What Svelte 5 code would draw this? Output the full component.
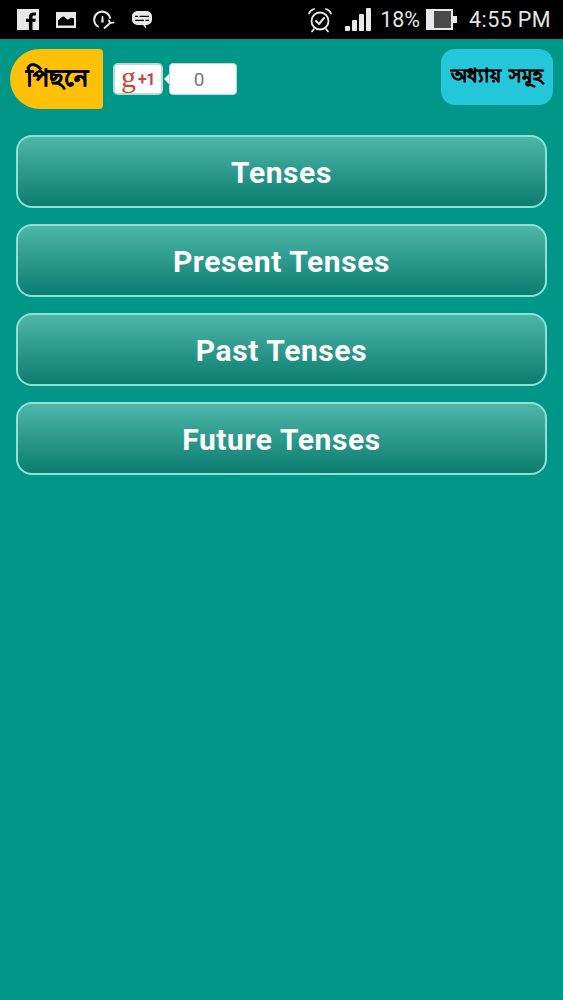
<script>
	const chapters = ['Tenses', 'Present Tenses', 'Past Tenses', 'Future Tenses'];
</script>

<div class="screen">
	<div class="status">
		<div class="status-left">
			<svg viewBox="0 0 22 21" width="22" height="21">
				<path fill="#e8e8e8" d="M0 0h22v21h-6.500v-8h2.800l.5-3.200h-3.300V8c0-1 .3-1.600 1.600-1.600h1.800V3.500c-.4 0-1.400-.1-2.600-.1-2.600 0-4.300 1.500-4.300 4.200v2.200H9V13h2.900v8H0z" />
			</svg>
			<svg viewBox="0 0 20 16" width="20" height="16">
				<path fill="#e8e8e8" fill-rule="evenodd" d="M0 0h20v16H0zM2 13.500h16V6.500c-1.500-.6-2.600-1-3.600-.5-1.200.6-1.800 1.700-3.200 1.400C9.800 7.100 9.300 4.800 7.600 4.500 5.800 4.200 4 7.200 2 8.500z" />
			</svg>
			<svg viewBox="0 0 22 19" width="22" height="19">
				<path fill="none" stroke="#e8e8e8" stroke-width="2" stroke-linecap="round" d="M5 16.500A8 8 0 1 1 17 8" />
				<path fill="#e8e8e8" d="M8.800 6h1.400l.5 5.500a1.200 1.200 0 1 1-2.400 0z" />
				<path fill="none" stroke="#e8e8e8" stroke-width="1.800" stroke-linecap="round" d="M11.500 18l6-5.500" />
				<path fill="none" stroke="#e8e8e8" stroke-width="1.800" stroke-linecap="round" d="M16 10.500c.2 2 2.200 3 4.500 2" />
			</svg>
			<svg viewBox="0 0 20 18" width="20" height="18">
				<path fill="#e8e8e8" fill-rule="evenodd" d="M6 0h8c3.500 0 6 2.300 6 5.500v3c0 3.200-2.500 5.500-6 5.500h-.5l1 4L11 14H6c-3.500 0-6-2.300-6-5.500v-3C0 2.300 2.500 0 6 0zM3 4.700V6h14V4.700zM3 8.700V10h14V8.700z" />
				<rect x="6" y="4" width="1.500" height="2.500" fill="#e8e8e8" />
				<rect x="12" y="8" width="1.500" height="2.500" fill="#e8e8e8" />
			</svg>
		</div>
		<div class="status-right">
			<svg viewBox="0 0 26 26" width="26" height="26">
				<circle cx="13" cy="14" r="8.500" fill="none" stroke="#e8e8e8" stroke-width="1.800" />
				<path fill="none" stroke="#e8e8e8" stroke-width="2" stroke-linecap="round" stroke-linejoin="round" d="M9 14l3 3 5-6" />
				<path fill="none" stroke="#e8e8e8" stroke-width="1.800" stroke-linecap="round" d="M2 6.500C3 4 5 2.500 7 2M24 6.500C23 4 21 2.500 19 2M7 22l-2 2.500M19 22l2 2.500" />
			</svg>
			<div class="signal">
				<span class="bar b1"></span>
				<span class="bar b2"></span>
				<span class="bar b3"></span>
				<span class="bar b4"></span>
			</div>
			<span class="pct">18%</span>
			<div class="battery">
				<div class="battery-body"><span class="battery-level"></span></div>
				<span class="battery-tip"></span>
			</div>
			<span class="time">4:55 PM</span>
		</div>
	</div>

	<div class="toolbar">
		<div class="back">পিছনে</div>
		<div class="plus">
			<span class="g">g</span><span class="one">+1</span>
		</div>
		<div class="count">0</div>
		<div class="chapters">অধ্যায় সমূহ</div>
	</div>

	<div class="list">
		{#each chapters as chapter}
			<button class="item">{chapter}</button>
		{/each}
	</div>
</div>

<style>
	:global(body) {
		margin: 0;
		background: #009688;
	}

	.screen {
		width: 563px;
		height: 1000px;
		background: #009688;
		font-family: 'Roboto', 'Liberation Sans', sans-serif;
		overflow: hidden;
	}

	.status {
		height: 39px;
		background: #000;
		display: flex;
		justify-content: space-between;
		align-items: center;
		color: #e4e4e4;
	}

	.status-left {
		display: flex;
		align-items: center;
		margin-left: 17px;
		gap: 17px;
	}

	.status-right {
		display: flex;
		align-items: center;
		margin-right: 12px;
	}

	.signal {
		display: flex;
		align-items: flex-end;
		gap: 2px;
		height: 23px;
		margin-left: 12px;
	}

	.bar {
		width: 5px;
		background: #e8e8e8;
		border-radius: 1px;
	}

	.b1 { height: 5px; }
	.b2 { height: 11px; }
	.b3 { height: 17px; }
	.b4 { height: 23px; }

	.pct {
		font-size: 21.5px;
		margin-left: 9px;
	}

	.battery {
		display: flex;
		align-items: center;
		margin-left: 6px;
	}

	.battery-body {
		width: 27px;
		height: 21px;
		box-sizing: border-box;
		border: 2px solid #e8e8e8;
		border-left: 0;
		background: #4a4a4a;
		display: flex;
	}

	.battery-level {
		width: 8px;
		background: #e8e8e8;
	}

	.battery-tip {
		width: 4px;
		height: 7px;
		background: #e8e8e8;
	}

	.time {
		font-size: 21.5px;
		margin-left: 12px;
		letter-spacing: 0.4px;
	}

	.toolbar {
		display: flex;
		align-items: center;
		box-sizing: border-box;
		height: 78px;
		padding: 10px 10px 8px 10px;
	}

	.back {
		width: 93px;
		height: 60px;
		background: #ffc107;
		border-radius: 30px 4px 4px 30px;
		display: flex;
		align-items: center;
		justify-content: center;
		color: #000;
		font-size: 24px;
		font-weight: 700;
		-webkit-text-stroke: 0.6px #000;
	}

	.plus {
		width: 50px;
		height: 32px;
		margin-left: 10px;
		box-sizing: border-box;
		background: #fff;
		border: 2px solid #b9dcd8;
		border-radius: 5px;
		display: flex;
		align-items: center;
		justify-content: center;
		color: #c9473a;
	}

	.g {
		font-family: 'Liberation Serif', serif;
		font-size: 30px;
		line-height: 24px;
		margin-top: -5px;
	}

	.one {
		font-size: 16px;
		font-weight: 700;
		letter-spacing: -0.5px;
		margin-left: 2px;
	}

	.count {
		position: relative;
		width: 68px;
		height: 32px;
		margin-left: 6px;
		box-sizing: border-box;
		padding-right: 8px;
		background: #fff;
		border: 1px solid #b9dcd8;
		border-radius: 4px;
		display: flex;
		align-items: center;
		justify-content: center;
		color: #777;
		font-size: 19px;
	}

	.count::before {
		content: '';
		position: absolute;
		left: -6px;
		top: 10px;
		border-style: solid;
		border-width: 5px 5px 5px 0;
		border-color: transparent #fff transparent transparent;
	}

	.chapters {
		align-self: flex-start;
		width: 112px;
		height: 56px;
		margin-left: auto;
		background: #26c6da;
		border-radius: 14px;
		display: flex;
		align-items: center;
		justify-content: center;
		color: #000;
		font-size: 18.5px;
		font-weight: 700;
		white-space: nowrap;
		word-spacing: 4px;
		-webkit-text-stroke: 0.5px #000;
	}

	.list {
		display: flex;
		flex-direction: column;
		gap: 16px;
		padding: 17.5px 16px 0;
	}

	.item {
		height: 73px;
		box-sizing: border-box;
		border: 2px solid #8fe0d6;
		border-radius: 16px;
		background: linear-gradient(to bottom, #4db6a8, #0b7d70);
		color: #fff;
		font-family: inherit;
		font-size: 30px;
		font-weight: 700;
		letter-spacing: 0.6px;
		cursor: pointer;
		padding: 2px 0 0;
	}
</style>
